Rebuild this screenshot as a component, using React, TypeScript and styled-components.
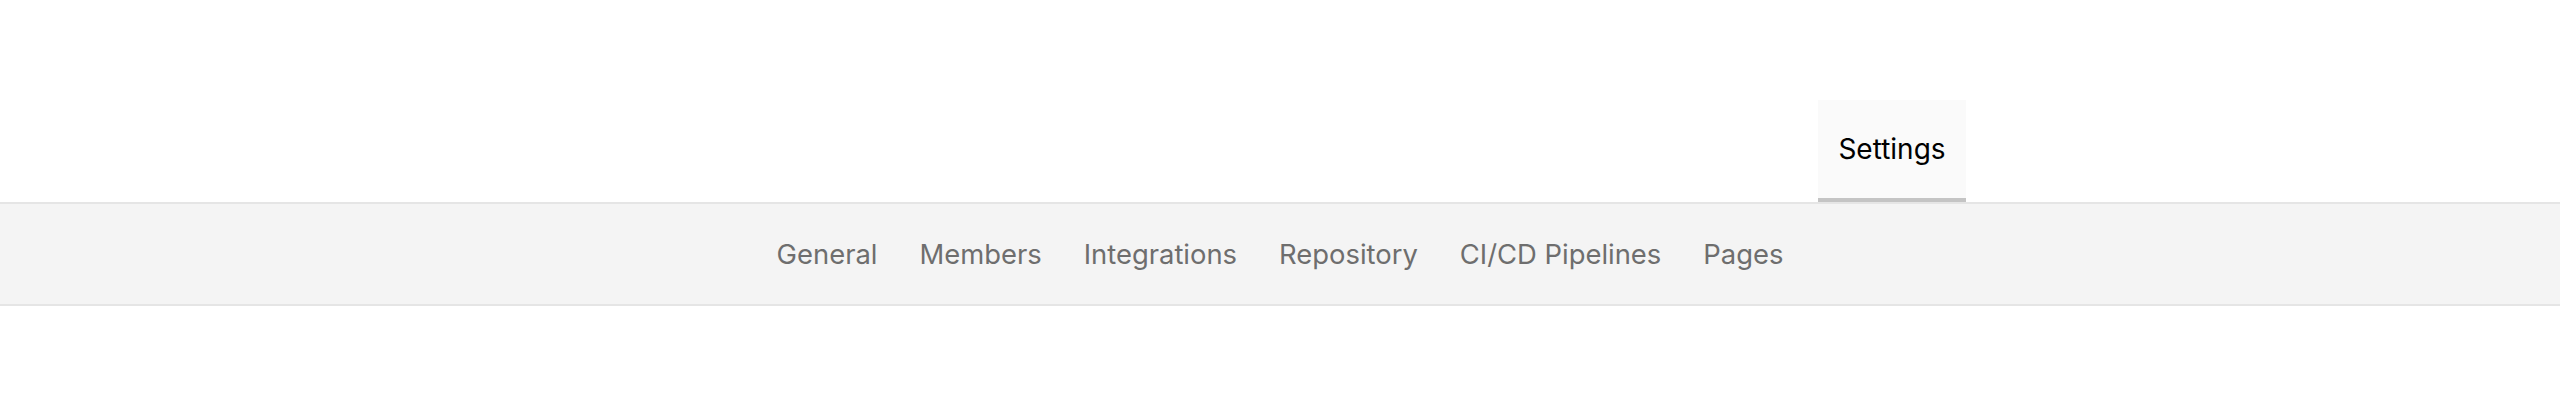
import React from "react";
import styled, { createGlobalStyle } from "styled-components";

const Global = createGlobalStyle`
  html, body { margin: 0; padding: 0; background: #ffffff; }
  body { font-family: Inter, "Noto Sans", "Liberation Sans", sans-serif; -webkit-font-smoothing: antialiased; }
`;

const Page = styled.div`
  width: 2560px;
  height: 406px;
  background: #ffffff;
  display: flex;
  flex-direction: column;
`;

const TopNav = styled.nav`
  height: 202px;
  display: flex;
  align-items: flex-end;
  padding-left: 1818px;
  box-sizing: border-box;
`;

const Tab = styled.a<{ $active?: boolean }>`
  height: 102px;
  width: 148px;
  box-sizing: border-box;
  display: flex;
  align-items: center;
  justify-content: center;
  background: ${(p) => (p.$active ? "#fafafa" : "transparent")};
  border-bottom: 4px solid ${(p) => (p.$active ? "#c4c4c4" : "transparent")};
  color: #000000;
  font-size: 28px;
  text-decoration: none;
`;

const SubNav = styled.div`
  height: 104px;
  box-sizing: border-box;
  background: #f4f4f4;
  border-top: 2px solid #e5e5e5;
  border-bottom: 2px solid #e5e5e5;
  display: flex;
  align-items: center;
  justify-content: center;
  gap: 42px;
`;

const SubLink = styled.a`
  color: #6e6e6e;
  font-size: 27.4px;
  text-decoration: none;
  white-space: nowrap;
`;

const items = ["General", "Members", "Integrations", "Repository", "CI/CD Pipelines", "Pages"];

export default function App() {
  return (
    <>
      <Global />
      <Page>
        <TopNav>
          <Tab $active href="#">Settings</Tab>
        </TopNav>
        <SubNav>
          {items.map((t) => (
            <SubLink key={t} href="#">{t}</SubLink>
          ))}
        </SubNav>
      </Page>
    </>
  );
}
